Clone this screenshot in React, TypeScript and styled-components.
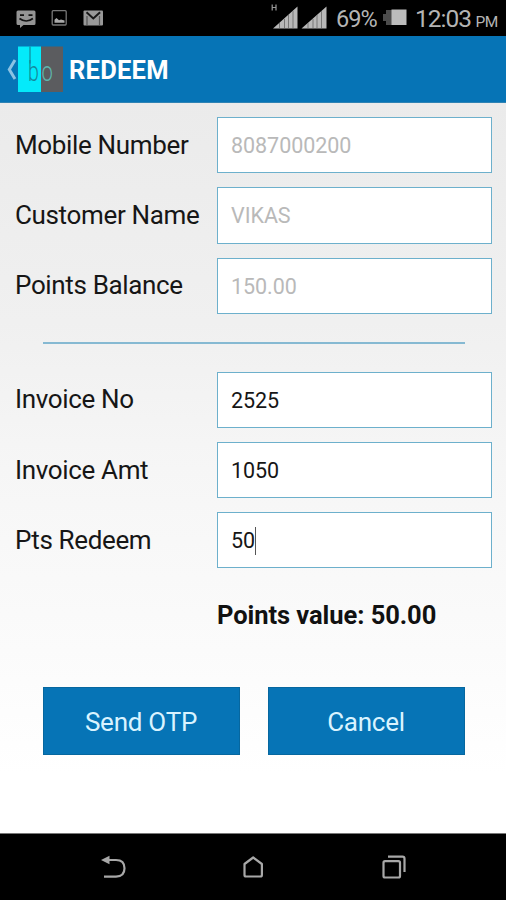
import React from 'react';
import styled, { createGlobalStyle } from 'styled-components';

const GlobalStyle = createGlobalStyle`
  *, *::before, *::after { box-sizing: border-box; }
  body { margin: 0; background: #000; font-family: Roboto, "Liberation Sans", sans-serif; }
`;

const Screen = styled.div`
  display: flex;
  flex-direction: column;
  width: 506px;
  height: 900px;
  overflow: hidden;
`;

const StatusBar = styled.div`
  display: flex;
  align-items: flex-start;
  justify-content: space-between;
  height: 36px;
  background: #000;
  color: #b4b4b4;
`;

const AppBar = styled.header`
  display: flex;
  align-items: center;
  height: 67px;
  padding-left: 6px;
  background: #0674b6;
  border-bottom: 1px solid #2f83b4;
`;

const Title = styled.h1`
  margin: 2px 0 0 6px;
  color: #fff;
  font-size: 25.5px;
  font-weight: 700;
  line-height: 30px;
  letter-spacing: 0.25px;
`;

const Content = styled.main`
  display: flex;
  flex-direction: column;
  height: 731px;
  padding-top: 14px;
  background: linear-gradient(#ebebeb, #f0f0f0 30%, #f6f6f6 50%, #fbfbfb 75%, #fff 92%);
  border-bottom: 1px solid #777;
`;

const Fields = styled.div`
  display: grid;
  gap: 14px;
  padding: 0 14px 0 15px;
`;

const Row = styled.label`
  display: grid;
  grid-template-columns: 202px 1fr;
  align-items: center;
  height: 56.3px;
`;

const LabelText = styled.span`
  color: #161616;
  font-size: 26px;
  line-height: 30px;
  letter-spacing: -0.35px;
  white-space: nowrap;
  padding-bottom: 1px;
`;

const Field = styled.span<{ $muted?: boolean }>`
  display: flex;
  align-items: center;
  height: 100%;
  padding: 1px 0 0 13px;
  border: 1px solid #6db0cc;
  background: #fff;
  color: ${(p) => (p.$muted ? '#b9b9b9' : '#161616')};
  font-size: 21.5px;
  letter-spacing: -0.05px;
`;

const Caret = styled.i`
  width: 1px;
  height: 28px;
  background: #555;
`;

const Divider = styled.hr`
  width: 422px;
  height: 2px;
  margin: 27.8px 0 27.9px 43px;
  border: 0;
  background: #86b9d2;
  flex-shrink: 0;
`;

const PointsValue = styled.p`
  margin: 32px 0 0 217px;
  color: #111;
  font-size: 25.5px;
  font-weight: 700;
  line-height: 30px;
  letter-spacing: -0.06px;
  white-space: nowrap;
`;

const Actions = styled.div`
  display: grid;
  grid-template-columns: 1fr 1fr;
  gap: 28px;
  margin-top: 56.5px;
  padding: 0 41.5px 0 42.5px;
`;

const Button = styled.button`
  height: 68px;
  padding: 2px 0 0;
  border: 0;
  background: #0674b6;
  box-shadow: inset 0 0 0 1px #06679f;
  color: #d9f3ff;
  font: 400 26px Roboto, "Liberation Sans", sans-serif;
  letter-spacing: -0.25px;
`;

const NavBar = styled.nav`
  height: 66px;
  background: #000;
`;

const Drawing = styled.svg`
  display: block;
  flex-shrink: 0;
`;

const StatusInfo = styled.div`
  display: flex;
  width: 237px;
  height: 36px;
`;

const StatusText = styled.span<{ $size: number; $width: number }>`
  width: ${(p) => p.$width}px;
  font-size: ${(p) => p.$size}px;
  line-height: 38px;
  letter-spacing: -1px;
  white-space: nowrap;
`;

const Meridiem = styled.small`
  margin-left: 4.5px;
  font-size: 15.5px;
  letter-spacing: -0.5px;
`;

const customerFields = [
  { label: 'Mobile Number', value: '8087000200' },
  { label: 'Customer Name', value: 'VIKAS' },
  { label: 'Points Balance', value: '150.00' },
];

const invoiceFields = [
  { label: 'Invoice No', value: '2525' },
  { label: 'Invoice Amt', value: '1050' },
  { label: 'Pts Redeem', value: '50', focused: true },
];

function Notifications() {
  return (
    <Drawing width="110" height="36" viewBox="0 0 110 36">
      <path d="M18 10.500h16q1.500 0 1.500 1.500v11.500q0 1.500-1.500 1.500h-10.500l-3.500 3v-3h-2q-1.500 0-1.500-1.500V12q0-1.500 1.500-1.500z" fill="#949494" />
      <path d="M20 15.200h4M28.500 15.200h4M19.500 18.500q6.700 5 13.400 0" fill="none" stroke="#111" strokeWidth="1.700" />
      <rect x="52.200" y="10.700" width="14" height="14.300" rx="1" fill="none" stroke="#777" strokeWidth="1.300" />
      <path d="M54.500 22.800v-3l2-1.800 2.500 2.200 2-.7 3.500 1V22.800z" fill="#aaa" />
      <rect x="83.500" y="10.500" width="19.500" height="15" rx="1" fill="#999" />
      <path d="M86.500 12.300l6.800 6.200 6.800-6.200" fill="none" stroke="#181818" strokeWidth="2" />
      <path d="M87 16v9M99.500 16v9" fill="none" stroke="#555" strokeWidth="1.200" />
    </Drawing>
  );
}

function Signals() {
  return (
    <Drawing width="67" height="36" viewBox="269 0 67 36">
      <path d="M272.200 4.500v6M276 4.500v6M272.200 7.500h3.800" stroke="#999" strokeWidth="1.200" fill="none" />
      <path d="M273 28.500L297.500 6.500v22zM301.500 28.500L326.500 6.500v22z" fill="#b8b8b8" />
      <path d="M279.500 23v5M284.500 19v9M288.500 15v13M293 11v17M308 23v5M313 19v9M317 15v13M321.500 11v17" stroke="#777" strokeWidth="1" />
    </Drawing>
  );
}

function Battery() {
  return (
    <Drawing width="33" height="36" viewBox="382 0 33 36">
      <path d="M383 14h3v-4h6v15h-6v-4h-3z" fill="#4c4c4c" />
      <rect x="391.500" y="9.500" width="15" height="15.500" fill="#bcbcbc" />
    </Drawing>
  );
}

function BackAndLogo() {
  return (
    <Drawing width="57" height="66" viewBox="6 36 57 66">
      <path d="M15 60L9.300 69.500l5.700 9.500" fill="none" stroke="#8bc2e3" strokeWidth="3" />
      <rect x="18" y="46.500" width="23" height="45.500" fill="#04eafa" />
      <rect x="41" y="46.500" width="22" height="45.500" fill="#5b5c5f" />
      <g fontFamily="Roboto" fontWeight="300" fontSize="28">
        <text transform="translate(28 80.500) scale(.7 1)" fill="#14899a">b</text>
        <text transform="translate(41.500 80.500) scale(.72 1)" fill="#5fb5ad">o</text>
      </g>
      <path d="M30 46.500v17" stroke="#14899a" strokeWidth="1.200" />
    </Drawing>
  );
}

function NavIcons() {
  return (
    <Drawing width="506" height="66" viewBox="0 834 506 66" fill="none" stroke="#a8a8a8" strokeWidth="2.200">
      <path d="M107 860h9q8.500 0 8.500 8.300t-8.500 8.300h-12" />
      <path d="M101 860l8.500-4.200v8.400z" fill="#a8a8a8" stroke="none" />
      <path d="M253.200 857.500l8.700 6.500v11q0 1.500-1.500 1.500H246q-1.500 0-1.500-1.500v-11z" strokeLinejoin="round" />
      <rect x="383.500" y="861.200" width="16.500" height="16.300" rx="1.500" />
      <path d="M388 856.700h14.500q2 0 2 2V872" />
    </Drawing>
  );
}

function FieldGroup({ items, muted }: { items: { label: string; value: string; focused?: boolean }[]; muted?: boolean }) {
  return (
    <Fields>
      {items.map((item) => (
        <Row key={item.label}>
          <LabelText>{item.label}</LabelText>
          <Field $muted={muted}>
            {item.value}
            {item.focused && <Caret />}
          </Field>
        </Row>
      ))}
    </Fields>
  );
}

export default function App() {
  return (
    <>
      <GlobalStyle />
      <Screen>
        <StatusBar>
          <Notifications />
          <StatusInfo>
            <Signals />
            <StatusText $size={23.5} $width={46}>69%</StatusText>
            <Battery />
            <StatusText $size={24.5} $width={91}>12:03<Meridiem>PM</Meridiem></StatusText>
          </StatusInfo>
        </StatusBar>
        <AppBar>
          <BackAndLogo />
          <Title>REDEEM</Title>
        </AppBar>
        <Content>
          <FieldGroup items={customerFields} muted />
          <Divider />
          <FieldGroup items={invoiceFields} />
          <PointsValue>Points value: 50.00</PointsValue>
          <Actions>
            <Button>Send OTP</Button>
            <Button>Cancel</Button>
          </Actions>
        </Content>
        <NavBar>
          <NavIcons />
        </NavBar>
      </Screen>
    </>
  );
}
